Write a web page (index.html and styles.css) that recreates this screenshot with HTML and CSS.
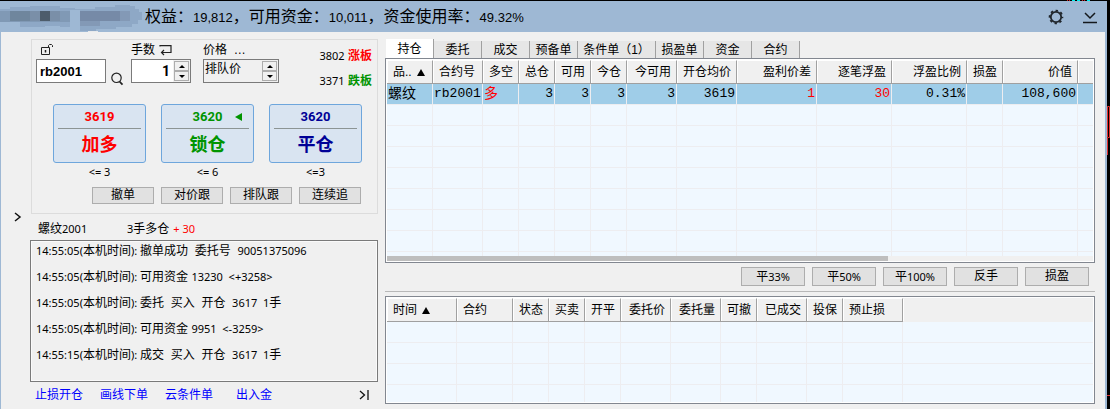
FILE: index.html
```html
<!DOCTYPE html>
<html lang="zh-CN">
<head>
<meta charset="utf-8">
<title>交易下单</title>
<link rel="stylesheet" href="styles.css">
</head>
<body>
<div class="window">
  <header class="titlebar">
    <svg class="account" width="143" height="30" viewBox="0 0 143 30" aria-hidden="true">
      <path fill="#8ea8c6" d="M0 7h10V5h20V4h30v2h15v1h20V5h20V3h15v1h5v3h4v3h3v8h-4v4h-6v3h-16v2H96v2H80V20h-10v5H60v-1H45v1H20v-5H0z"/>
      <path fill="#8099b5" d="M0 9h80v1h-10v10H0z"/>
      <path fill="#6f869d" d="M10 9h20v10H10z"/>
      <path fill="#7a8fa8" d="M30 9h10v10H30zM50 9h10v10H50z"/>
      <path fill="#4d5c6b" d="M40 9h10v10H40z"/>
      <path fill="#768aa7" d="M80 9h40v10H80z"/>
      <path fill="#9eb8d4" d="M70 8h10v20H70z"/>
      <path fill="#8399b6" d="M120 9h10v10h-10zM80 19h20v5H80z"/>
      <path fill="#e8eaec" d="M88 29h10v1H88z"/>
    </svg>
    <p class="funds">权益：<span class="num">19,812</span>，可用资金：<span class="num">10,011</span>，资金使用率：<span class="num">49.32%</span></p>
    <div class="tools">
      <button class="icon-btn" aria-label="设置">
        <svg width="16" height="16" viewBox="0 0 16 16" fill="none" stroke="#20262c"><circle cx="8" cy="8" r="5.2" stroke-width="1.8"/><circle cx="8" cy="8" r="6.4" stroke-width="1.800" stroke-dasharray="2.4 2.63" stroke-dashoffset="1.2"/></svg>
      </button>
      <button class="icon-btn" aria-label="收起">
        <svg width="16" height="16" viewBox="0 0 16 16" fill="none" stroke="#14181c" stroke-width="1.500"><path d="M3 4l5 5 5-5"/><path d="M1 13.500h14"/></svg>
      </button>
    </div>
  </header>

  <div class="body">
    <aside class="gutter">
      <button class="icon-btn" aria-label="展开"><svg width="8" height="10" viewBox="0 0 8 10" fill="none" stroke="#111" stroke-width="1.5"><path d="M1 1l5 4-5 4"/></svg></button>
    </aside>

    <section class="ticket">
      <form class="order">
        <div class="entry">
          <div class="field contract">
            <label for="code" aria-label="合约"><svg width="14" height="13" viewBox="0 0 14 13" fill="none" stroke="#222"><path d="M1.500 4.500h8v7h-8z"/><path d="M8.500 4V2.500l1-1h2l1 1V4"/><path d="M5.500 7v2.500" stroke-width="1.500"/></svg></label>
            <input id="code" class="box" value="rb2001">
          </div>
          <button type="button" class="icon-btn search" aria-label="查找"><svg width="13" height="14" viewBox="0 0 13 14" fill="none" stroke="#222" stroke-width="1.200"><circle cx="5.500" cy="5.800" r="4.700"/><path d="M8.500 9.500l3 3.200" stroke-width="1.800"/></svg></button>
          <div class="field qty">
            <label for="qty">手数 <svg width="13" height="12" viewBox="0 0 13 12" fill="none" stroke="#222" stroke-width="1.200"><path d="M1 2.500V1.600h11v6.900H3"/><path d="M5 6L2.500 8.500 5 11"/></svg></label>
            <div class="spin"><input id="qty" value="1"><div class="steps"><button type="button" aria-label="增加"><i class="up"></i></button><button type="button" aria-label="减少"><i class="down"></i></button></div></div>
          </div>
          <div class="field price">
            <label for="price">价格&nbsp; …</label>
            <div class="spin"><input id="price" value="排队价"><div class="steps"><button type="button" aria-label="上一项"><i class="up"></i></button><button type="button" aria-label="下一项"><i class="down"></i></button></div></div>
          </div>
          <div class="limits">
            <span><span class="num">3802</span> <b class="red">涨板</b></span>
            <span><span class="num">3371</span> <b class="green">跌板</b></span>
          </div>
        </div>
        <div class="trades">
          <div class="trade red"><button type="button"><span class="quote">3619</span><span class="act">加多</span></button><small>&lt;= 3</small></div>
          <div class="trade green"><button type="button"><span class="quote">3620<i class="mark"></i></span><span class="act">锁仓</span></button><small>&lt;= 6</small></div>
          <div class="trade navy"><button type="button"><span class="quote">3620</span><span class="act">平仓</span></button><small>&lt;=3</small></div>
        </div>
        <div class="follow">
          <button type="button">撤单</button><button type="button">对价跟</button><button type="button">排队跟</button><button type="button">连续追</button>
        </div>
      </form>
      <p class="status"><span class="name">螺纹<span class="num">2001</span></span><span><span class="num">3</span>手多仓</span><span class="num red">+ 30</span></p>
      <div class="log">
        <p><span class="num">14:55:05(</span>本机时间<span class="num">): </span>撤单成功&nbsp; 委托号&nbsp; <span class="num">90051375096</span></p>
        <p><span class="num">14:55:05(</span>本机时间<span class="num">): </span>可用资金 <span class="num">13230 &nbsp;&lt;+3258&gt;</span></p>
        <p><span class="num">14:55:05(</span>本机时间<span class="num">): </span>委托&nbsp; 买入&nbsp; 开仓&nbsp; <span class="num">3617 &nbsp;1</span>手</p>
        <p><span class="num">14:55:05(</span>本机时间<span class="num">): </span>可用资金 <span class="num">9951 &nbsp;&lt;-3259&gt;</span></p>
        <p><span class="num">14:55:15(</span>本机时间<span class="num">): </span>成交&nbsp; 买入&nbsp; 开仓&nbsp; <span class="num">3617 &nbsp;1</span>手</p>
      </div>
      <nav class="links">
        <a href="#">止损开仓</a><a href="#">画线下单</a><a href="#">云条件单</a><a class="last" href="#">出入金</a>
        <button class="icon-btn end" aria-label="最后"><svg width="10" height="10" viewBox="0 0 10 10" fill="none" stroke="#111" stroke-width="1.300"><path d="M1 1l4.500 4L1 9"/><path d="M9 0v10"/></svg></button>
      </nav>
    </section>

    <main class="desk">
      <div class="tabs" role="tablist">
        <button role="tab" aria-selected="true" class="on">持仓</button><button role="tab">委托</button><button role="tab">成交</button><button role="tab">预备单</button><button role="tab" class="wide">条件单（1）</button><button role="tab">损盈单</button><button role="tab">资金</button><button role="tab">合约</button>
      </div>
      <div class="grid">
        <table>
          <colgroup><col class="w46"><col class="w50"><col class="w36"><col class="w36"><col class="w36"><col class="w36"><col class="w50"><col class="w60"><col class="w80"><col class="w75"><col class="w75"><col class="w36"><col class="w75"><col></colgroup>
          <thead><tr><th>品.. <i class="sort"></i></th><th>合约号</th><th>多空</th><th class="r">总仓</th><th class="r">可用</th><th class="r">今仓</th><th class="r">今可用</th><th class="r">开仓均价</th><th class="r">盈利价差</th><th class="r">逐笔浮盈</th><th class="r">浮盈比例</th><th>损盈</th><th class="r">价值</th><th></th></tr></thead>
          <tbody>
            <tr class="sel"><td>螺纹</td><td>rb2001</td><td class="red">多</td><td class="r">3</td><td class="r">3</td><td class="r">3</td><td class="r">3</td><td class="r">3619</td><td class="r red">1</td><td class="r red">30</td><td class="r">0.31%</td><td></td><td class="r">108,600</td><td></td></tr>
            <tr><td><td><td><td><td><td><td><td><td><td><td><td><td><td></tr>
            <tr><td><td><td><td><td><td><td><td><td><td><td><td><td><td></tr>
            <tr><td><td><td><td><td><td><td><td><td><td><td><td><td><td></tr>
            <tr><td><td><td><td><td><td><td><td><td><td><td><td><td><td></tr>
            <tr><td><td><td><td><td><td><td><td><td><td><td><td><td><td></tr>
            <tr><td><td><td><td><td><td><td><td><td><td><td><td><td><td></tr>
            <tr><td><td><td><td><td><td><td><td><td><td><td><td><td><td></tr>
            <tr class="cut"><td><td><td><td><td><td><td><td><td><td><td><td><td><td></tr>
          </tbody>
        </table>
        <div class="track"><div class="thumb"></div></div>
      </div>
      <div class="closers">
        <button>平<span class="num">33%</span></button><button>平<span class="num">50%</span></button><button>平<span class="num">100%</span></button><button>反手</button><button>损盈</button>
      </div>
      <hr>
      <div class="grid">
        <table class="orders">
          <colgroup><col class="w70"><col class="w56"><col class="w36"><col class="w36"><col class="w36"><col class="w50"><col class="w50"><col class="w36"><col class="w50"><col class="w36"><col class="w60"><col></colgroup>
          <thead><tr><th>时间 <i class="sort"></i></th><th>合约</th><th>状态</th><th>买卖</th><th>开平</th><th class="r">委托价</th><th class="r">委托量</th><th>可撤</th><th class="r">已成交</th><th>投保</th><th>预止损</th><th class="blank"></th></tr></thead>
          <tbody>
            <tr><td><td><td><td><td><td><td><td><td><td><td><td></tr>
            <tr><td><td><td><td><td><td><td><td><td><td><td><td></tr>
            <tr><td><td><td><td><td><td><td><td><td><td><td><td></tr>
            <tr class="part"><td><td><td><td><td><td><td><td><td><td><td><td></tr>
          </tbody>
        </table>
      </div>
    </main>
  </div>
</div>
<svg class="candles" width="4" height="409" viewBox="0 0 4 409" fill="none" aria-hidden="true"><path stroke="#e03030" d="M1.500 106.500h2v31h-2zM1.500 138v17M1 395.500h3"/></svg>
<svg class="ticks" width="26" height="1" viewBox="0 0 26 1" aria-hidden="true"><path fill="#c22" d="M0 0h1v1H0zM2 0h1v1H2zM15 0h1v1h-1zM17 0h1v1h-1z"/><path fill="#0ee" d="M5 0h3v1H5zM10 0h3v1h-3zM20 0h3v1h-3z"/></svg>
</body>
</html>
```
FILE: styles.css
```css
* { box-sizing: border-box; }

body {
  margin: 0;
  min-height: 100vh;
  position: relative;
  display: flex;
  background: #000;
  color: #000;
  font: 12px/18px "Liberation Sans", "Noto Sans CJK SC", sans-serif;
}

p { margin: 0; }
button, input { font: inherit; color: inherit; margin: 0; padding: 0; }
.num { font-family: "Noto Sans", sans-serif; font-size: 11px; white-space: pre; }
.red { color: #f00; }
.green { color: #009400; }
.navy { color: #000096; }

.window {
  flex: 1;
  display: flex;
  flex-direction: column;
  margin: 1px 3px 0 0;
  background: #9eb8d4;
}

.titlebar { display: flex; align-items: center; height: 31px; gap: 2px; }
.account { flex: none; }
.funds { font-size: 16px; line-height: 31px; white-space: nowrap; }
.funds .num { font: 13px "Liberation Sans", sans-serif; }
.tools { margin-left: auto; display: flex; gap: 18px; padding-right: 9px; }
.icon-btn { display: flex; border: 0; background: none; }

.body {
  flex: 1;
  display: flex;
  margin: 0 2px 0 1px;
  padding-right: 10px;
  background: #f0f0f0;
}
.gutter { flex: none; width: 29px; padding: 180px 0 0 13px; }

.ticket { flex: none; width: 348px; padding-top: 7px; }
.order { border: 1px solid #dcdcdc; height: 175px; margin-left: 1px; padding: 0 5px 0 4px; }
.entry { display: flex; }
.field { display: flex; flex-direction: column; }
.field label { display: flex; align-items: center; gap: 4px; height: 19px; }
.contract { width: 70px; }
.contract label { padding-left: 4px; }
.box, .spin { border: 1px solid #7a7a7a; background: #fff; height: 24px; }
.box {
  width: 100%;
  padding: 0 3px;
  font: bold 13px "Liberation Sans", sans-serif;
}
.search { align-self: flex-end; margin: 0 7px 4px 5px; }
.spin { display: flex; }
.spin input { flex: 1; min-width: 0; width: 0; border: 0; background: none; }
.steps { width: 17px; display: grid; grid-template-rows: 1fr 1fr; padding: 1px; background: #f0f0f0; }
.steps button { display: grid; place-items: center; border: 1px solid #adadad; background: #f0f0f0; }
.up, .down { border: 3px solid transparent; }
.up { border-top: 0; border-bottom-color: #000; }
.down { border-bottom: 0; border-top-color: #000; }
.qty { width: 60px; }
.qty input { text-align: right; padding-right: 3px; font: bold 14px "Roboto", sans-serif; }
.price { width: 76px; margin-left: 12px; }
.price .spin { background: #f0f0f0; }
.price input { padding: 0 0 4px 1px; }
.limits {
  margin-left: auto;
  padding-top: 7px;
  display: flex;
  flex-direction: column;
  gap: 7px;
}

.trades { display: flex; gap: 15px; padding: 20px 0 0 17px; }
.entry + .trades { padding-top: 14px; }
.trade { width: 93px; text-align: center; }
.trade button {
  display: block;
  width: 100%;
  height: 59px;
  padding: 0 4px;
  border: 1px solid #6ea6dc;
  border-radius: 3px;
  background: #d9e4f1;
}
.quote {
  position: relative;
  display: block;
  border-bottom: 1px solid #8c9494;
  font: bold 13px/22px "Roboto", sans-serif;
}
.act { display: block; font-size: 18px; font-weight: bold; line-height: 32px; }
.mark {
  position: absolute;
  top: 7px;
  right: 7px;
  border: 4px solid transparent;
  border-left: 0;
  border-right: 7px solid #009400;
}
.trade small { display: block; color: #000; font: 11px/18px "Noto Sans", sans-serif; }

.follow { display: flex; justify-content: flex-end; gap: 7px; padding: 6px 11px 0 0; }
.follow button, .closers button { border: 1px solid #adadad; background: #e1e1e1; }
.follow button { width: 62px; height: 17px; line-height: 15px; }

.status { display: flex; padding: 6px 0 2px 8px; }
.status .name { width: 89px; }
.status .red { padding-left: 4px; line-height: 18px; }
.log {
  height: 142px;
  border: 1px solid #7a7a7a;
  box-shadow: inset 0 0 0 1px #fafafa;
  padding: 1px 5px;
}
.log p { height: 26px; white-space: nowrap; }
.links { display: flex; gap: 17px; padding: 4px 9px 0 5px; }
.links a { color: #00f; text-decoration: none; }
.links .last { margin-left: 6px; }
.end { margin-left: auto; align-self: center; }

.desk { flex: 1; min-width: 0; margin-left: 7px; padding-top: 7px; }
.tabs { display: flex; align-items: flex-end; padding-left: 1px; height: 19px; }
.tabs button {
  width: 48px;
  height: 17px;
  border: 0;
  border-right: 1px solid #a0a0a0;
  background: #e6e6e6;
  line-height: 17px;
  padding-top: 1px;
  white-space: nowrap;
}
.tabs .wide { width: 78px; }
.tabs .on { height: 19px; background: #fff; }

.grid { border: 1px solid #828790; padding: 1px; background: #fff; }
table { width: 100%; table-layout: fixed; border-collapse: separate; border-spacing: 0; }
.w36 { width: 36px; }
.w46 { width: 46px; }
.w50 { width: 50px; }
.w56 { width: 56px; }
.w60 { width: 60px; }
.w70 { width: 70px; }
.w75 { width: 75px; }
.w80 { width: 80px; }
th {
  height: 24px;
  padding: 0 5px 0 6px;
  background: #f0f0f0;
  border-top: 1px solid #fff;
  border-right: 1px solid #a0a0a0;
  border-bottom: 1px solid #a0a0a0;
  box-shadow: inset 1px 0 #fff;
  font-weight: normal;
  line-height: 18px;
  text-align: left;
  white-space: nowrap;
}
th:last-child { border-right: 0; }
th.blank { border-color: #f0f0f0; }
td {
  height: 21px;
  padding: 0 1px;
  background: #f0f8ff;
  border-right: 1px solid #ededf0;
  border-bottom: 1px solid #ededf0;
  font: 13px/16px "Liberation Mono", "Noto Sans CJK SC", monospace;
  white-space: nowrap;
}
td:last-child { border-right: 0; }
.sel td { background: #9fcde8; }
.sel td:first-child, .sel td:nth-child(3) { font-size: 14px; }
.r { text-align: right; }
.cut td { height: 4px; border-bottom: 0; }
.part td { height: 17px; border-bottom: 0; }
.sort {
  display: inline-block;
  margin-left: 2px;
  border: 4px solid transparent;
  border-top: 0;
  border-bottom: 7px solid #000;
}
.track { height: 5px; background: #f0f0f0; }
.thumb { width: 71%; height: 5px; background: #bebebe; }

.closers { display: flex; justify-content: flex-end; gap: 7px; padding: 4px 6px 5px 0; }
.closers button { width: 64px; height: 19px; line-height: 17px; }
hr { margin: 0 0 4px; border: 0; border-top: 1px solid #b8b8b8; }

.candles { position: absolute; top: 0; right: 0; }
.ticks { position: absolute; top: 0; right: 17px; }
```
